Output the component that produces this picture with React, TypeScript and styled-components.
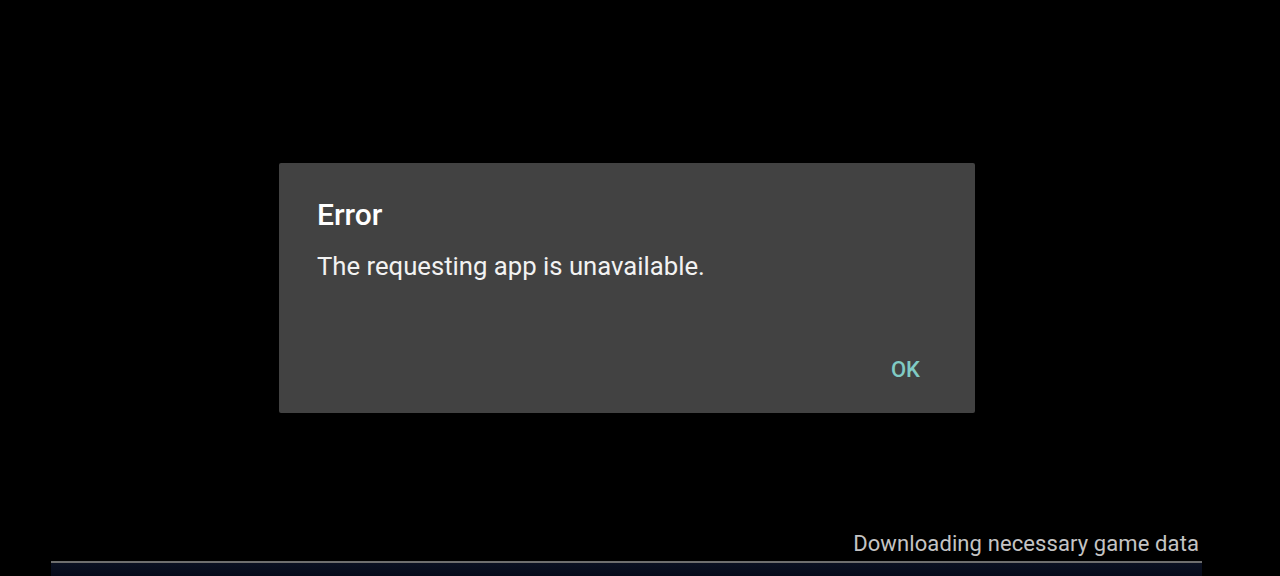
import React from "react";
import styled, { createGlobalStyle } from "styled-components";

const Global = createGlobalStyle`
  html, body { margin: 0; padding: 0; background: #000; }
  body { font-family: Roboto, "Noto Sans", sans-serif; }
`;

const Page = styled.div`
  width: 1280px;
  height: 576px;
  background: #000;
  display: flex;
  flex-direction: column;
  padding-top: 163px;
  box-sizing: border-box;
  overflow: hidden;
`;

const Dialog = styled.div`
  margin-left: 279px;
  width: 696px;
  height: 250px;
  background: #424242;
  border-radius: 2px;
  box-sizing: border-box;
  display: flex;
  flex-direction: column;
  padding: 35px 55px 30px 38px;
`;

const Title = styled.div`
  font-size: 30px;
  line-height: 34px;
  font-weight: 500;
  color: #ffffff;
`;

const Message = styled.div`
  margin-top: 19px;
  font-size: 25.7px;
  line-height: 30px;
  color: #f2f2f2;
`;

const Actions = styled.div`
  margin-top: auto;
  display: flex;
  justify-content: flex-end;
`;

const TextButton = styled.button`
  background: none;
  border: none;
  padding: 0;
  font-family: Roboto, sans-serif;
  font-size: 22px;
  line-height: 26px;
  font-weight: 500;
  color: #80cbc4;
  cursor: pointer;
`;

const Footer = styled.div`
  margin-top: auto;
  margin-left: 51px;
  width: 1151px;
  display: flex;
  flex-direction: column;
`;

const Caption = styled.div`
  text-align: right;
  padding-right: 3px;
  font-size: 22px;
  line-height: 26px;
  letter-spacing: 0.1px;
  color: #c4c4c4;
  margin-bottom: 4px;
`;

const Bar = styled.div`
  height: 15px;
  box-sizing: border-box;
  border-top: 2px solid #6e6e6e;
  background: linear-gradient(#0b1122, #060a1a);
`;

export default function App() {
  return (
    <>
      <Global />
      <Page>
        <Dialog>
          <Title>Error</Title>
          <Message>The requesting app is unavailable.</Message>
          <Actions>
            <TextButton>OK</TextButton>
          </Actions>
        </Dialog>
        <Footer>
          <Caption>Downloading necessary game data</Caption>
          <Bar />
        </Footer>
      </Page>
    </>
  );
}
